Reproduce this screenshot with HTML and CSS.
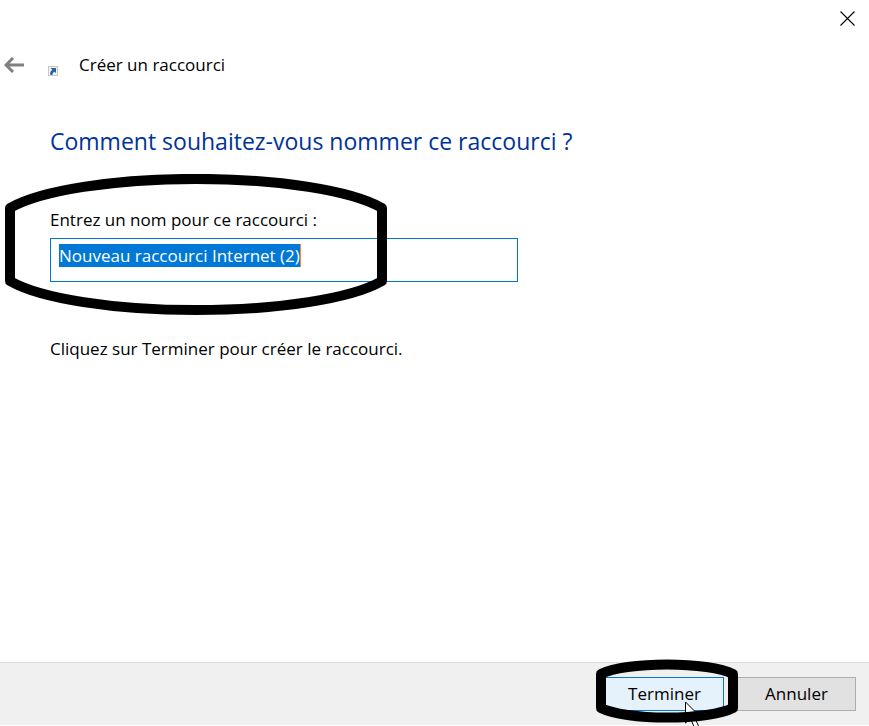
FILE: index.html
```html
<!DOCTYPE html>
<html lang="fr">
<head>
    <meta charset="UTF-8">
    <meta name="viewport" content="width=device-width, initial-scale=1.0">
    <title>Créer un raccourci</title>
    <link rel="stylesheet" href="styles.css">
</head>
<body>
    <form class="wizard" id="shortcutForm">
        <div class="titlebar">
            <button type="button" class="icon-btn" aria-label="Fermer">
                <svg width="15" height="15" viewBox="0 0 15 15">
                    <path d="M0.5 0.5 L14.5 14.5 M14.5 0.5 L0.5 14.5" fill="none" stroke="#000" stroke-width="1.1"/>
                </svg>
            </button>
        </div>

        <header class="header">
            <button type="button" class="icon-btn" aria-label="Retour">
                <svg width="20" height="16" viewBox="0 0 20 16">
                    <path d="M20 8 H2 M9 1 L2 8 L9 15" fill="none" stroke="#808080" stroke-width="3"/>
                </svg>
            </button>
            <svg class="shortcut-icon" width="10" height="10" viewBox="0 0 10 10">
                <rect x="0.5" y="0.5" width="9" height="9" fill="#f4f4f4" stroke="#c8c8c8"/>
                <path d="M2.5 2 H8 V7 L6.5 5.7 C5 6.5 4.4 7.4 4.5 9 H2.5 C1.6 7 2.6 5 4.4 3.8 Z" fill="#2860a8"/>
            </svg>
            <span>Créer un raccourci</span>
        </header>

        <main class="content">
            <h1>Comment souhaitez-vous nommer ce raccourci ?</h1>

            <div class="field">
                <label for="nom">Entrez un nom pour ce raccourci :</label>
                <input type="text" id="nom" name="nom" value="Nouveau raccourci Internet (2)" autocomplete="off" spellcheck="false">
                <span class="caret"></span>
                <svg class="ring ring-field" width="384" height="142" viewBox="0 0 384 142">
                    <path d="M6 34 A200 46 0 0 1 378 34 V107 A200 46 0 0 1 6 107 Z"/>
                </svg>
            </div>

            <p>Cliquez sur Terminer pour créer le raccourci.</p>
        </main>

        <footer class="footer">
            <div class="finish">
                <button type="submit" class="btn btn-active">Terminer</button>
                <svg class="cursor" width="19" height="30" viewBox="0 0 19 30">
                    <path d="M0.5 1 V22 L5.5 17.5 L10 28 L14 26 L9.5 16.5 H16 Z" fill="#fff" stroke="#000"/>
                </svg>
                <svg class="ring ring-finish" width="144" height="66" viewBox="0 0 144 66">
                    <path d="M6 16 A72 16 0 0 1 138 16 V50 A72 16 0 0 1 6 50 Z"/>
                </svg>
            </div>
            <button type="button" class="btn">Annuler</button>
        </footer>
    </form>

    <script>
        const nom = document.getElementById('nom');
        nom.focus();
        nom.select();

        document.getElementById('shortcutForm').addEventListener('submit', (e) => {
            e.preventDefault();
        });
    </script>
</body>
</html>
```
FILE: styles.css
```css
* {
    box-sizing: border-box;
    margin: 0;
    padding: 0;
}

body {
    font-family: 'Open Sans', 'Noto Sans', sans-serif;
    font-size: 17px;
    line-height: 24px;
    color: #000;
    background-color: #fff;
}

.wizard {
    display: flex;
    flex-direction: column;
    min-height: 100vh;
    padding-bottom: 1px;
    overflow: hidden;
}

.titlebar {
    display: flex;
    justify-content: flex-end;
    padding: 11px 14px;
}

.icon-btn {
    display: flex;
    border: none;
    background: none;
    cursor: pointer;
}

.header {
    display: flex;
    align-items: center;
    padding: 16px 4px;
}

.shortcut-icon {
    margin: 12px 21px 0 24px;
}

.content {
    flex: 1;
    padding: 32px 50px;
}

h1 {
    font-size: 23px;
    font-weight: 400;
    line-height: 32px;
    color: #003399;
}

.field {
    position: relative;
    max-width: 468px;
    margin: 51px 0 55px;
}

.field label {
    display: block;
    margin-bottom: 6px;
}

.field input {
    display: block;
    width: 100%;
    height: 44px;
    padding: 3px 8px 13px;
    border: 1px solid #0078d7;
    font: inherit;
    line-height: 26px;
    outline: none;
}

.field input::selection {
    color: #fff;
    background-color: #0078d7;
}

.caret {
    position: absolute;
    top: 36px;
    left: 250px;
    width: 1px;
    height: 23px;
    background-color: #ff8728;
}

.ring {
    position: absolute;
    pointer-events: none;
}

.ring path {
    fill: none;
    stroke: #000;
    stroke-width: 10;
    stroke-linejoin: round;
}

.ring-field {
    top: -34px;
    left: -46px;
}

.footer {
    display: flex;
    justify-content: flex-end;
    gap: 13px;
    padding: 14px 13px;
    background-color: #f0f0f0;
    border-top: 1px solid #dfdfdf;
}

.finish {
    position: relative;
}

.btn {
    display: block;
    width: 119px;
    height: 34px;
    border: 1px solid #adadad;
    background-color: #e1e1e1;
    color: #000;
    font: inherit;
    cursor: pointer;
}

.btn-active {
    border-color: #0078d7;
    background-color: #e5f1fb;
}

.ring-finish {
    top: -19px;
    left: -10px;
}

.cursor {
    position: absolute;
    top: 24px;
    left: 80px;
}
```
